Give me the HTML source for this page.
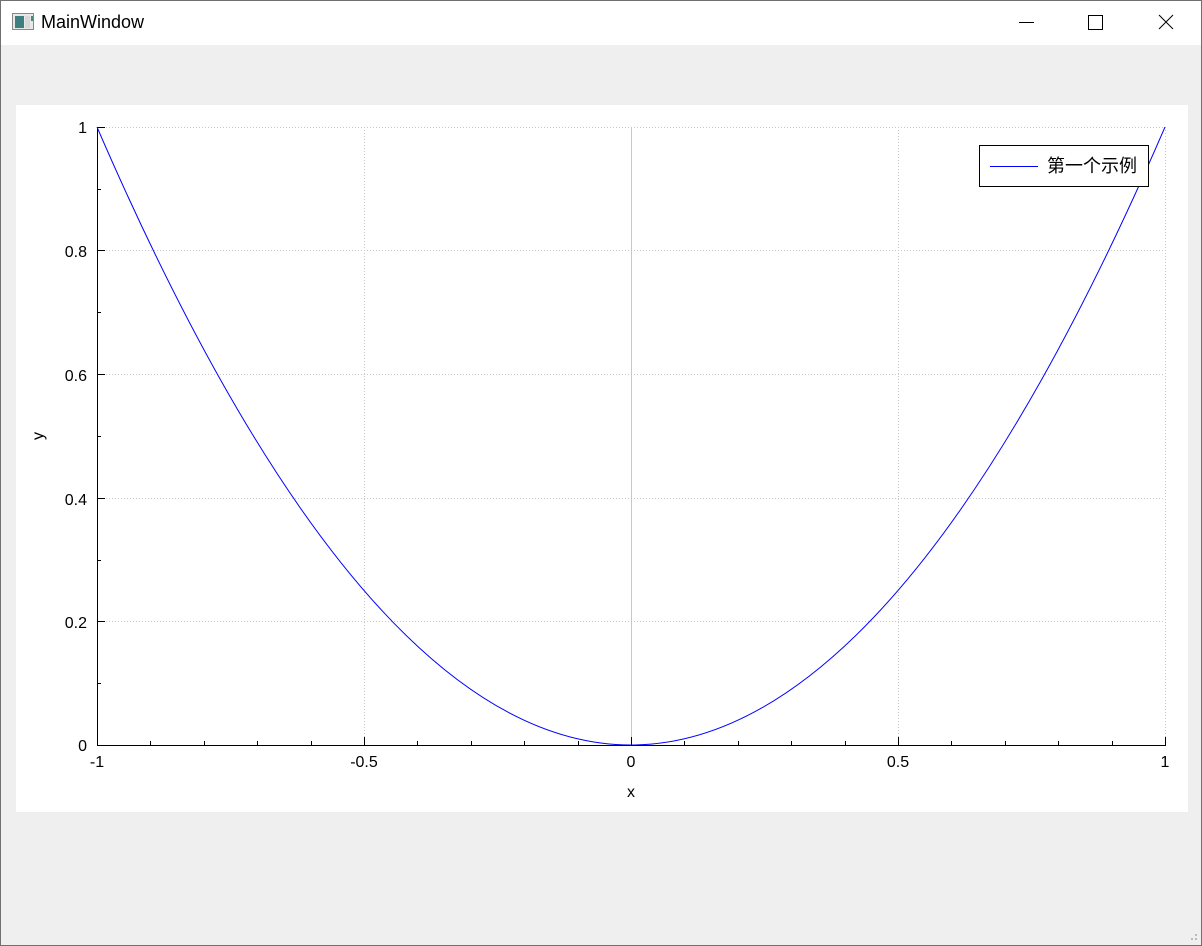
<!DOCTYPE html>
<html><head><meta charset="utf-8"><style>
body{margin:0;width:1202px;height:946px;overflow:hidden;background:#efefef;font-family:"Liberation Sans","Noto Sans CJK SC",sans-serif}
</style></head><body>
<svg width="1202" height="946" xmlns="http://www.w3.org/2000/svg" style="position:absolute;left:0;top:0">
<rect x="0" y="0" width="1202" height="946" fill="#efefef"/>
<rect x="0" y="0" width="1202" height="45" fill="#fff"/>
<rect x="0.5" y="0.5" width="1201" height="945" fill="none" stroke="#707070"/>
<rect x="12.5" y="13.5" width="21" height="16" fill="#e8e8e8" stroke="#888"/>
<rect x="15" y="16" width="9" height="12" fill="#3d7f80"/>
<rect x="25" y="16" width="5" height="12" fill="#d8d8d8"/>
<rect x="31" y="16" width="2" height="5" fill="#4a8a6a"/>
<text x="41" y="28" font-size="18" fill="#000">MainWindow</text>
<line x1="1019" y1="22.5" x2="1034" y2="22.5" stroke="#000"/>
<rect x="1088.5" y="15.5" width="14" height="14" fill="none" stroke="#000"/>
<path d="M1159 15L1173 29M1173 15L1159 29" stroke="#000"/>
<rect x="16" y="105" width="1172" height="707" fill="#fff"/>
<g stroke="#c8c8c8" stroke-dasharray="1,2">
<line x1="97" y1="127.5" x2="1165" y2="127.5"/><line x1="97" y1="250.5" x2="1165" y2="250.5"/>
<line x1="97" y1="374.5" x2="1165" y2="374.5"/><line x1="97" y1="498.5" x2="1165" y2="498.5"/>
<line x1="97" y1="621.5" x2="1165" y2="621.5"/>
<line x1="364.5" y1="127" x2="364.5" y2="745"/><line x1="898.5" y1="127" x2="898.5" y2="745"/>
<line x1="1165.5" y1="127" x2="1165.5" y2="745"/>
</g>
<line x1="631.5" y1="127" x2="631.5" y2="745" stroke="#c8c8c8"/>
<line x1="97.5" y1="127" x2="97.5" y2="745.5" stroke="#000"/>
<line x1="97" y1="745.5" x2="1166" y2="745.5" stroke="#000"/>
<g stroke="#000">
<path d="M150.5 745v-4M204.5 745v-4M257.5 745v-4M311.5 745v-4M364.5 745v-8M417.5 745v-4M471.5 745v-4M524.5 745v-4M578.5 745v-4M631.5 745v-8M684.5 745v-4M738.5 745v-4M791.5 745v-4M845.5 745v-4M898.5 745v-8M951.5 745v-4M1005.5 745v-4M1058.5 745v-4M1112.5 745v-4M1165.5 745v-8"/>
<path d="M97 683.5h4M97 621.5h8M97 560.5h4M97 498.5h8M97 436.5h4M97 374.5h8M97 312.5h4M97 250.5h8M97 189.5h4M97 127.5h8"/>
</g>
<path d="M97 127 Q631 1363 1165 127" fill="none" stroke="#0000ff"/>
<g font-size="16" fill="#000">
<text x="87" y="751" text-anchor="end">0</text>
<text x="87" y="628" text-anchor="end">0.2</text>
<text x="87" y="505" text-anchor="end">0.4</text>
<text x="87" y="381" text-anchor="end">0.6</text>
<text x="87" y="257" text-anchor="end">0.8</text>
<text x="87" y="133" text-anchor="end">1</text>
<text x="97" y="767" text-anchor="middle">-1</text>
<text x="364" y="767" text-anchor="middle">-0.5</text>
<text x="631" y="767" text-anchor="middle">0</text>
<text x="898" y="767" text-anchor="middle">0.5</text>
<text x="1165" y="767" text-anchor="middle">1</text>
<text x="631" y="797" text-anchor="middle">x</text>
<text transform="translate(43,436) rotate(-90)" text-anchor="middle">y</text>
</g>
<rect x="979.5" y="145.5" width="169" height="41" fill="#fff" stroke="#000"/>
<line x1="990" y1="166.5" x2="1038" y2="166.5" stroke="#0000ff"/>
<text x="1047" y="172" font-size="18" fill="#000">第一个示例</text>
<g fill="#bbb"><rect x="1195" y="934" width="2" height="2"/><rect x="1191" y="938" width="2" height="2"/><rect x="1195" y="938" width="2" height="2"/></g>
</svg>
</body></html>
